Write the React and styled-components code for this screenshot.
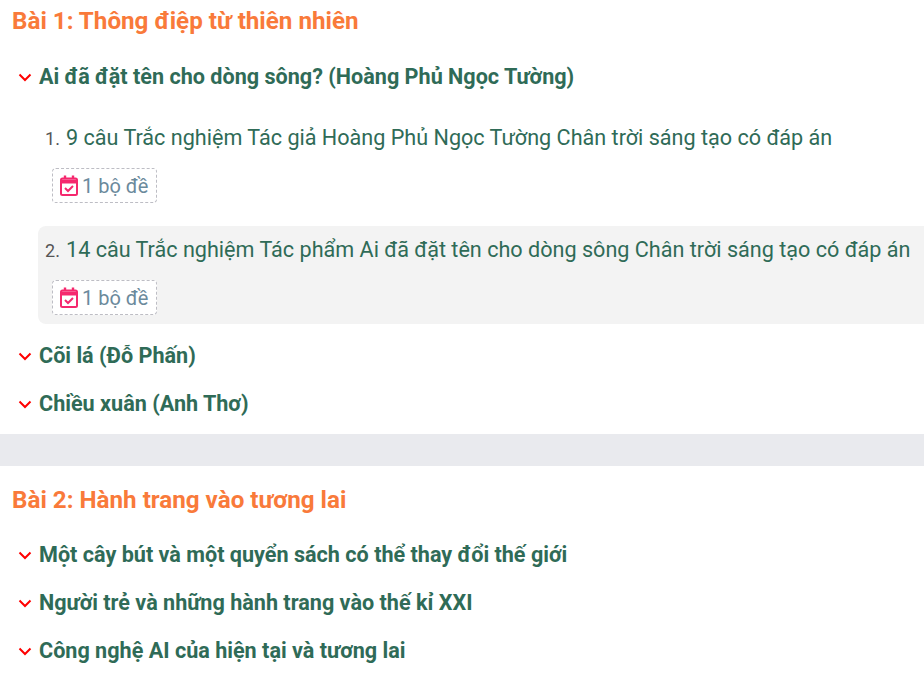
import React from 'react';
import styled, { createGlobalStyle } from 'styled-components';

const GlobalStyle = createGlobalStyle`
  html, body {
    margin: 0;
    padding: 0;
    background: #fff;
    overflow: hidden;
  }
  body {
    font-family: Roboto, "Noto Sans", sans-serif;
  }
`;

const Page = styled.div`
  width: 924px;
  height: 673px;
  overflow: hidden;
`;

const Section = styled.section`
  padding: ${p => (p.$spaced ? '13px' : '0')} 0 0 12px;
`;

const SectionTitle = styled.h2`
  margin: 0 0 8px;
  font-size: 24.2px;
  line-height: 32px;
  height: 43px;
  padding-top: 5px;
  box-sizing: border-box;
  font-weight: 700;
  color: #f97a3a;
`;

const Divider = styled.div`
  height: 32px;
  margin-top: 7px;
  background: #e9eaee;
`;

const Lesson = styled.div`
  display: flex;
  align-items: center;
  height: 48px;
  gap: 7px;
  padding-left: 6px;
  margin-top: ${p => (p.$open ? '9px' : '0')};
`;

const LessonTitle = styled.h3`
  margin: 0;
  font-size: 21.6px;
  font-weight: 700;
  color: #2f6b57;
`;

const Quizzes = styled.ol`
  list-style: none;
  margin: 14px 0 7px 26px;
  padding: 0;
`;

const Quiz = styled.li`
  display: flex;
  flex-direction: column;
  align-items: flex-start;
  height: 98px;
  box-sizing: border-box;
  padding: 6px 0 0 7px;
  margin-top: ${p => (p.$first ? '0' : '14px')};
  border-radius: 8px 0 0 8px;
  background: ${p => (p.$active ? '#f3f3f3' : 'transparent')};
`;

const QuizLine = styled.div`
  display: flex;
  align-items: baseline;
  height: 36px;
  line-height: 36px;
  font-size: 21.6px;
  color: #2f6b57;
  white-space: nowrap;
`;

const Num = styled.span`
  font-size: 18px;
  width: 21px;
  color: #555;
`;

const Badge = styled.div`
  display: flex;
  align-items: center;
  gap: 4px;
  box-sizing: border-box;
  height: 35px;
  margin: 12px 0 0 7px;
  padding: 0 8px 0 7px;
  border: 1px dashed #bdbdc4;
  border-radius: 4px;
  background: #fff;
  font-size: 20px;
  color: #6b8a9c;
`;

function Chevron() {
  return (
    <svg width="14" height="14" viewBox="0 0 14 14" fill="none">
      <path d="M1.5 5.5 L7 11 L12.5 5.5" stroke="#f00" strokeWidth="2" />
    </svg>
  );
}

function CalendarCheck() {
  return (
    <svg width="18" height="21" viewBox="0 0 18 21" fill="none">
      <rect x="1" y="3.5" width="16" height="16.5" rx="1.5" stroke="#f5286e" strokeWidth="2" />
      <path d="M1 6.5 H17" stroke="#f5286e" strokeWidth="4" />
      <path d="M5 0.5 V4 M13 0.5 V4" stroke="#f5286e" strokeWidth="2.4" />
      <path d="M5 13 L8 16 L13 11" stroke="#f5286e" strokeWidth="2" />
    </svg>
  );
}

function LessonRow({ title, open }) {
  return (
    <Lesson $open={open}>
      <Chevron />
      <LessonTitle>{title}</LessonTitle>
    </Lesson>
  );
}

function QuizRow({ n, title, active, first }) {
  return (
    <Quiz $active={active} $first={first}>
      <QuizLine>
        <Num>{n}.</Num>
        {title}
      </QuizLine>
      <Badge>
        <CalendarCheck />
        1 bộ đề
      </Badge>
    </Quiz>
  );
}

export default function App() {
  return (
    <Page>
      <GlobalStyle />
      <Section>
        <SectionTitle>Bài 1: Thông điệp từ thiên nhiên</SectionTitle>
        <LessonRow open title="Ai đã đặt tên cho dòng sông? (Hoàng Phủ Ngọc Tường)" />
        <Quizzes>
          <QuizRow first n={1} title="9 câu Trắc nghiệm Tác giả Hoàng Phủ Ngọc Tường Chân trời sáng tạo có đáp án" />
          <QuizRow active n={2} title="14 câu Trắc nghiệm Tác phẩm Ai đã đặt tên cho dòng sông Chân trời sáng tạo có đáp án" />
        </Quizzes>
        <LessonRow title="Cõi lá (Đỗ Phấn)" />
        <LessonRow title="Chiều xuân (Anh Thơ)" />
      </Section>
      <Divider />
      <Section $spaced>
        <SectionTitle>Bài 2: Hành trang vào tương lai</SectionTitle>
        <LessonRow title="Một cây bút và một quyển sách có thể thay đổi thế giới" />
        <LessonRow title="Người trẻ và những hành trang vào thế kỉ XXI" />
        <LessonRow title="Công nghệ AI của hiện tại và tương lai" />
      </Section>
    </Page>
  );
}
